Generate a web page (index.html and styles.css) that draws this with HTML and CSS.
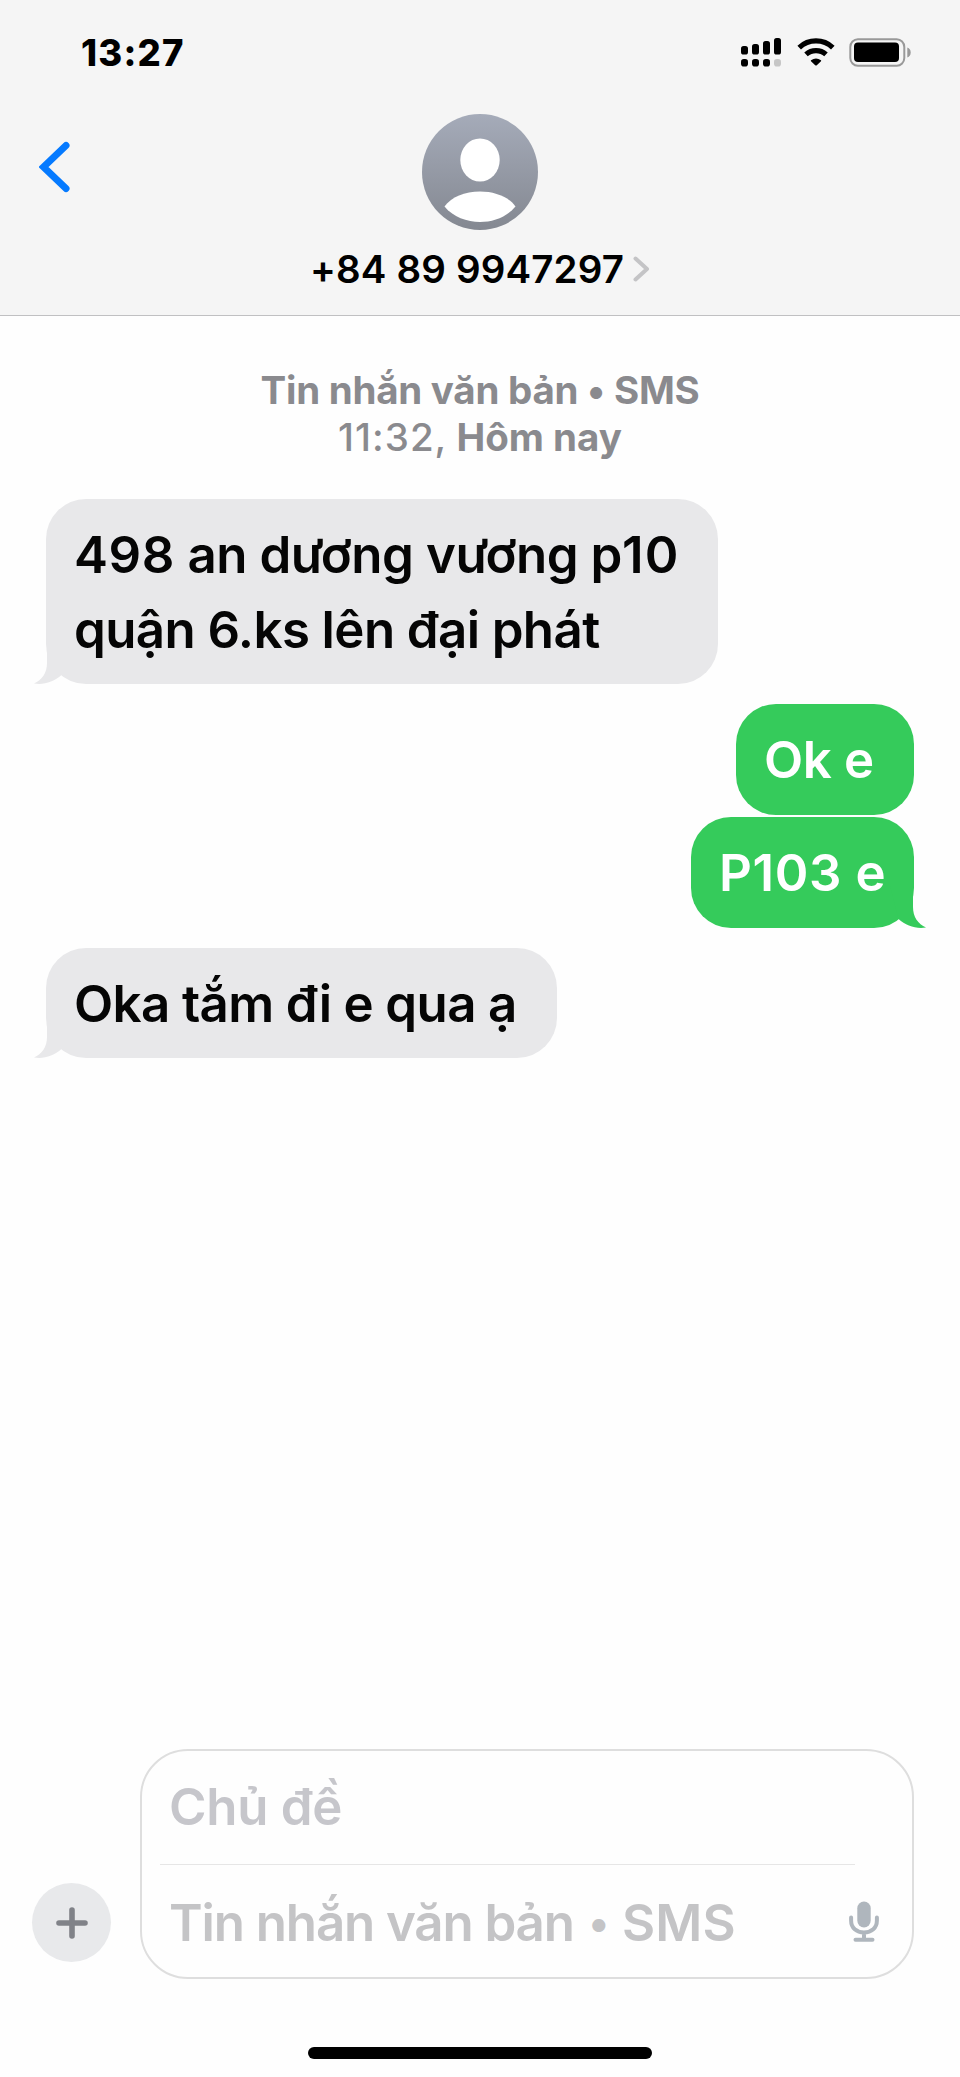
FILE: index.html
```html
<!DOCTYPE html>
<html lang="vi">
<head>
<meta charset="utf-8">
<title>+84 89 9947297</title>
<link rel="stylesheet" href="styles.css">
</head>
<body>
<div class="phone">
  <header class="header">
    <div class="status">
      <span class="clock">13:27</span>
      <svg class="status-icons" width="172" height="30" viewBox="0 0 172 30">
        <g fill="#000">
          <rect x="1" y="9" width="7" height="8.5" rx="2.6"/>
          <rect x="12" y="7" width="7" height="10.5" rx="2.6"/>
          <rect x="23" y="4" width="7" height="13.5" rx="2.6"/>
          <rect x="34" y="1" width="7" height="16.5" rx="2.6"/>
          <rect x="1" y="22" width="7" height="7.5" rx="2.8"/>
          <rect x="12" y="22" width="7" height="7.5" rx="2.8"/>
          <rect x="23" y="22" width="7" height="7.5" rx="2.8"/>
        </g>
        <rect x="34" y="22" width="7" height="7.5" rx="2.8" fill="#c6c6c6"/>
        <g fill="none" stroke="#000" stroke-width="5.2">
          <path d="M59.2 10.6a24.5 24.5 0 0 1 33.6 0"/>
          <path d="M66 17.4a15 15 0 0 1 20 0"/>
        </g>
        <path d="M71 23.2q5-3.6 10 0q.4.5 0 1l-4.2 4q-.8.6-1.6 0l-4.2-4q-.4-.5 0-1z" fill="#000"/>
        <rect x="110.3" y="2.3" width="54" height="26.4" rx="7.6" fill="none" stroke="#999" stroke-width="2"/>
        <rect x="114" y="5.6" width="45" height="19.4" rx="4" fill="#000"/>
        <path d="M167.3 10.5q3.4 1.400 3.400 5t-3.400 5z" fill="#999"/>
      </svg>
    </div>
    <div class="contact">
      <svg class="back" width="32" height="52" viewBox="0 0 32 52"><path d="M27 4.500L4.500 26L27 47.500" fill="none" stroke="#057aff" stroke-width="7" stroke-linecap="round" stroke-linejoin="miter"/></svg>
      <svg class="avatar" width="116" height="116" viewBox="0 0 116 116">
        <defs>
          <linearGradient id="shade" x1="0" y1="0" x2="0" y2="1"><stop offset="0" stop-color="#a5abb9"/><stop offset="1" stop-color="#848891"/></linearGradient>
        </defs>
        <circle cx="58" cy="58" r="58" fill="url(#shade)"/>
        <ellipse cx="58" cy="46" rx="19.700" ry="21.600" fill="#fff"/>
        <path d="M22.500 92.500C29 83 43 77.500 58 77.500s29 5.500 35.500 15C85 103 71 108 58 108s-27-5-35.500-15.500z" fill="#fff"/>
      </svg>
      <div class="number"><span class="number-text">+84 89 9947297</span><svg width="17" height="26" viewBox="0 0 17 26"><path d="M2.500 2.500L14 13L2.500 23.500" fill="none" stroke="#c4c4c6" stroke-width="4" stroke-linecap="round" stroke-linejoin="round"/></svg></div>
    </div>
  </header>

  <main class="thread">
    <div class="stamp">
      <div class="stamp-kind">Tin nhắn văn bản • SMS</div>
      <div class="stamp-time"><span class="stamp-hour">11:32,</span> Hôm nay</div>
    </div>
    <div class="bubble received first">
      <div class="line-a"><span class="house">498</span> an dương vương <span class="ward">p10</span></div>
      <div class="line-b">quận 6.ks lên đại phát</div>
      <svg class="tail tail-left" width="36" height="42" viewBox="0 0 36 42"><path d="M13 0V21C13 31 8 38 0 41.500C10 43 20 40 27.500 33L36 0z" fill="#e8e8ea"/></svg>
    </div>
    <div class="bubble sent ok">Ok e</div>
    <div class="bubble sent room">P103 e
      <svg class="tail tail-right" width="36" height="42" viewBox="0 0 36 42"><path d="M23 0V21C23 31 28 38 36 41.500C26 43 16 40 8.500 33L0 0z" fill="#35cb5b"/></svg>
    </div>
    <div class="bubble received last">Oka tắm đi e qua ạ
      <svg class="tail tail-left" width="36" height="42" viewBox="0 0 36 42"><path d="M13 0V21C13 31 8 38 0 41.500C10 43 20 40 27.500 33L36 0z" fill="#e8e8ea"/></svg>
    </div>
  </main>

  <footer class="composer">
    <div class="plus"><svg width="32" height="32" viewBox="0 0 32 32"><path d="M16 3V29M3 16H29" stroke="#808288" stroke-width="5.600" stroke-linecap="round"/></svg></div>
    <div class="field">
      <div class="subject">Chủ đề</div>
      <div class="message">
        <span class="message-text">Tin nhắn văn bản <span class="dot">•</span> <span class="kind">SMS</span></span>
        <svg width="30" height="42" viewBox="0 0 30 42">
          <rect x="8.300" y="0.500" width="13.400" height="26" rx="6.700" fill="#afb6bd"/>
          <path d="M2.100 16.500V19.500C2.100 27 7.500 31.500 15 31.500S27.900 27 27.900 19.500V16.500M15 31.500V38.500M6.500 38.800H23.500" fill="none" stroke="#afb6bd" stroke-width="4" stroke-linecap="round"/>
        </svg>
      </div>
    </div>
  </footer>
  <div class="home"></div>
</div>
</body>
</html>
```
FILE: styles.css
```css
* { box-sizing: border-box; }
body { margin: 0; background: #fefefe; font-family: Inter, "Noto Sans", sans-serif; }
.phone { width: 960px; height: 2077px; display: flex; flex-direction: column; white-space: nowrap; overflow: hidden; }

.header { height: 316px; background: #f5f5f5; border-bottom: 1px solid #c0c0c2; }
.status { display: flex; justify-content: space-between; align-items: flex-start; height: 113px; padding: 37px 48px 0 81px; }
.clock { font-size: 36.500px; line-height: 32px; font-weight: 800; letter-spacing: 1.2px; }
.contact { display: grid; grid-template-columns: 1fr 116px 1fr; grid-template-rows: 116px auto; }
.back { margin: 28px 0 0 39px; }
.avatar { margin-top: 0.5px; }
.number { grid-column: 1 / -1; display: flex; align-items: center; gap: 9px; padding: 16px 0 0 310px; font-size: 38.500px; line-height: 48px; font-weight: 600; letter-spacing: 0.15px; }

.thread { flex: 1; display: flex; flex-direction: column; align-items: flex-start; padding: 51px 46px 0; }
.stamp { align-self: stretch; text-align: center; color: #8a8a8e; font-size: 38.500px; line-height: 47px; font-weight: 700; margin-bottom: 38px; }
.stamp-kind { letter-spacing: -0.25px; }
.stamp-hour { font-weight: 500; letter-spacing: 1px; }
.bubble { position: relative; padding: 18px 28px; border-radius: 40px; font-size: 51px; line-height: 75px; font-weight: 600; }
.received { background: #e8e8ea; color: #050505; }
.sent { background: #35cb5b; color: #fff; align-self: flex-end; }
.first { width: 672px; height: 185px; margin-bottom: 20px; }
.line-a { letter-spacing: -0.45px; }
.house { letter-spacing: 0.6px; }
.ward { letter-spacing: 1.200px; }
.line-b { letter-spacing: -0.6px; }
.ok { width: 178px; height: 111px; margin-bottom: 2px; letter-spacing: -0.4px; }
.room { width: 223px; height: 111px; margin-bottom: 20px; letter-spacing: 0.6px; }
.last { width: 511px; height: 110px; letter-spacing: -0.62px; }
.tail { position: absolute; bottom: 0; }
.tail-left { left: -12px; }
.tail-right { right: -12px; }

.composer { display: flex; align-items: flex-end; gap: 29px; height: 230px; padding: 0 46px 0 32px; }
.plus { display: flex; align-items: center; justify-content: center; width: 79px; height: 79px; margin-bottom: 17px; border-radius: 50%; background: #e8e9eb; }
.field { flex: 1; height: 230px; border: 2px solid #dedede; border-radius: 48px; font-size: 51px; font-weight: 600; }
.subject { height: 114px; margin: 0 57px 0 18px; padding: 18px 0 0 9px; line-height: 76px; letter-spacing: -0.3px; border-bottom: 1px solid #e6e6e6; color: #c6c6cb; }
.message { display: flex; align-items: center; justify-content: space-between; height: 112px; padding: 2px 33px 0 27px; color: #c4c4c6; }
.message-text { letter-spacing: -1.1px; }
.dot { display: inline-block; transform: scale(0.82); }
.kind { letter-spacing: 0.2px; }
.home { width: 344px; height: 12px; margin: 68px auto 18px; border-radius: 6px; background: #000; }
```
